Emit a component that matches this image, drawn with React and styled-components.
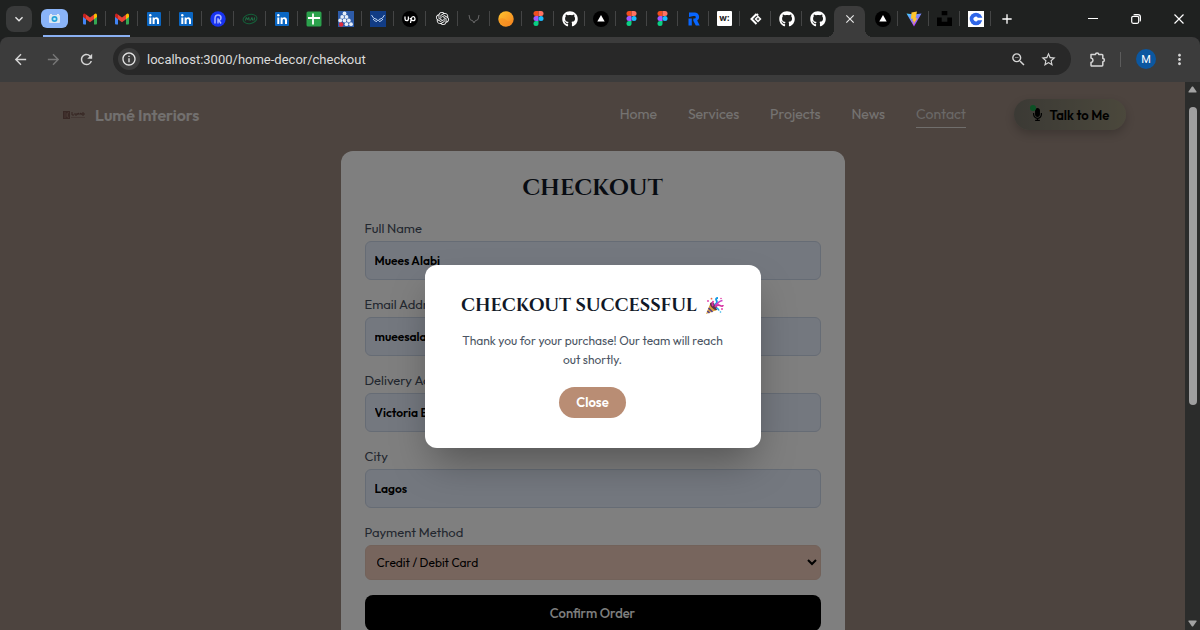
import { useState } from "react";
import styled, { createGlobalStyle } from "styled-components";
import { FaGithub, FaMicrophone } from "react-icons/fa";
import { SiOpenai, SiUnsplash } from "react-icons/si";
import {
  MdArrowBack,
  MdArrowForward,
  MdRefresh,
  MdInfoOutline,
  MdStarBorder,
  MdMoreVert,
  MdAdd,
  MdClose,
  MdKeyboardArrowDown,
  MdOutlineZoomOut,
} from "react-icons/md";

const GlobalStyle = createGlobalStyle`
  * {
    box-sizing: border-box;
  }
  body {
    margin: 0;
    background: #1f2020;
    font-family: Outfit, Lato, sans-serif;
  }
  button, input, select {
    font-family: inherit;
  }
`;

const Browser = styled.div`
  display: flex;
  flex-direction: column;
  height: 100vh;
  overflow: hidden;
`;

/* ---------- tab strip ---------- */

const TabStrip = styled.div`
  display: flex;
  align-items: stretch;
  height: 37px;
  flex-shrink: 0;
  padding-left: 6px;
  background: #1f2120;
`;

const TabSearch = styled.button`
  align-self: center;
  width: 26px;
  height: 26px;
  padding: 0;
  border: none;
  border-radius: 8px;
  display: flex;
  align-items: center;
  justify-content: center;
  background: #393a3a;
  color: #e8e8e8;
  font-size: 16px;
`;

const TabGroup = styled.div`
  display: flex;
  margin-left: 9px;
  background: linear-gradient(#8ab0f2, #8ab0f2) 2px 100% / 87px 2px no-repeat;
`;

const GroupChip = styled.button`
  align-self: center;
  width: 27px;
  height: 19px;
  margin-right: 6px;
  padding: 0;
  border: none;
  border-radius: 6px;
  background: #8ab4f8;
  display: flex;
  align-items: center;
  justify-content: center;
`;

const Tab = styled.button`
  width: ${(props) => (props.$narrow ? 31 : 32)}px;
  padding: 0;
  border: none;
  background: ${(props) =>
    props.$divider
      ? "linear-gradient(#444545, #444545) 100% 50% / 1px 15px no-repeat"
      : "none"};
  color: #fff;
  display: flex;
  align-items: center;
  justify-content: center;
`;

const ActiveTab = styled.button`
  align-self: flex-end;
  position: relative;
  width: 31px;
  height: 31px;
  margin: 0 2px 0 1px;
  padding: 0 0 5px;
  border: none;
  border-radius: 8px 8px 0 0;
  background: #3c3c3c;
  color: #e8e8e8;
  display: flex;
  align-items: center;
  justify-content: center;
  font-size: 14px;

  &::before,
  &::after {
    content: "";
    position: absolute;
    bottom: 0;
    width: 8px;
    height: 8px;
  }
  &::before {
    right: 100%;
    background: radial-gradient(circle at 0 0, transparent 8px, #3c3c3c 8px);
  }
  &::after {
    left: 100%;
    background: radial-gradient(circle at 100% 0, transparent 8px, #3c3c3c 8px);
  }
`;

const WindowControls = styled.div`
  margin-left: auto;
  display: flex;
`;

const WindowButton = styled.button`
  width: 43px;
  padding: 0;
  border: none;
  background: none;
  color: #fff;
  display: flex;
  align-items: center;
  justify-content: center;
`;

/* ---------- toolbar ---------- */

const Toolbar = styled.div`
  display: flex;
  align-items: center;
  height: 45px;
  flex-shrink: 0;
  padding: 0 4px;
  border-bottom: 1px solid #3c3c3c;
  border-radius: 8px 8px 0 0;
  background: #3c3c3c;
`;

const ToolButton = styled.button`
  width: 33px;
  height: 32px;
  padding: 0;
  border: none;
  background: none;
  color: ${(props) => (props.$dim ? "#777777" : "#d6d6d6")};
  display: flex;
  align-items: center;
  justify-content: center;
  font-size: 17px;
`;

const AddressBar = styled.div`
  flex: 1;
  display: flex;
  align-items: center;
  height: 32px;
  margin: 0 10px;
  padding: 0 8px 0 5px;
  border-radius: 16px;
  background: #282828;
`;

const SiteInfo = styled.button`
  width: 22px;
  height: 22px;
  padding: 0;
  border: none;
  border-radius: 50%;
  background: #3c3c3c;
  color: #e3e3e3;
  display: flex;
  align-items: center;
  justify-content: center;
  font-size: 16px;
`;

const Url = styled.input`
  flex: 1;
  min-width: 0;
  padding: 0 7px;
  border: none;
  outline: none;
  background: none;
  color: #dadada;
  font-family: Roboto, sans-serif;
  font-size: 13px;
`;

const AddressButton = styled(ToolButton)`
  width: 30px;
`;

const ToolDivider = styled.div`
  width: 1px;
  height: 15px;
  margin: 0 8px 0 6px;
  background: #5c5c5c;
`;

const Avatar = styled.button`
  width: 20px;
  height: 20px;
  margin: 0 7px;
  padding: 0;
  border: none;
  border-radius: 50%;
  background: #0b57a0;
  color: #fff;
  font-family: Roboto, sans-serif;
  font-size: 11px;
`;

/* ---------- web page ---------- */

const Viewport = styled.div`
  flex: 1;
  min-height: 0;
  display: flex;
`;

const Page = styled.div`
  position: relative;
  flex: 1;
  overflow: hidden;
  background: #9a887e;
`;

const Header = styled.header`
  display: flex;
  align-items: center;
  height: 65px;
  padding: 0 59px 0 63px;
`;

const Brand = styled.a`
  display: flex;
  align-items: center;
  gap: 10px;
  color: #f3f1ef;
  opacity: 0.85;
  font-size: 16px;
  font-weight: 600;
  text-decoration: none;
`;

const Nav = styled.nav`
  display: flex;
  gap: 31px;
  margin-left: auto;
`;

const NavLink = styled.a`
  padding: 4px 0;
  border-bottom: 1px solid ${(props) => (props.$active ? "#e0dcd9" : "transparent")};
  color: ${(props) => (props.$active ? "#d5d1ce" : "#eae6e3")};
  font-size: 14px;
  line-height: 18px;
  text-decoration: none;
`;

const TalkButton = styled.button`
  display: flex;
  align-items: center;
  justify-content: center;
  gap: 6px;
  width: 112px;
  height: 31px;
  margin-left: 48px;
  padding: 0;
  border: none;
  border-radius: 16px;
  background: linear-gradient(90deg, #77746a, #969078);
  box-shadow: 0 4px 10px rgba(0, 0, 0, 0.2);
  color: #000;
  font-size: 13px;
  font-weight: 600;
`;

const Mic = styled.span`
  position: relative;
  display: flex;
`;

const OnlineDot = styled.span`
  position: absolute;
  top: -3px;
  left: -1px;
  width: 6px;
  height: 6px;
  border-radius: 50%;
  background: #16a34a;
`;

const Card = styled.form`
  width: 504px;
  max-width: 100%;
  margin: 4px auto 0;
  padding: 24px;
  border-radius: 12px;
  background: #fff;
`;

const Title = styled.h1`
  margin: 0 0 16px;
  color: #111827;
  font-family: Cinzel, "Liberation Serif", serif;
  font-size: 23px;
  line-height: 28px;
  font-weight: 700;
  text-align: center;
`;

const Field = styled.div`
  display: flex;
  flex-direction: column;
  gap: 4px;
  margin-bottom: 15px;
`;

const Label = styled.label`
  color: #475060;
  font-size: 13px;
  line-height: 18px;
`;

const Input = styled.input`
  width: 100%;
  height: 39px;
  padding: 0 9px;
  border: 1px solid #cdd8ea;
  border-radius: 6px;
  background: #e8f0fe;
  color: #000;
  font-size: 12px;
  font-weight: 600;
`;

const Select = styled.select`
  width: 100%;
  height: 35px;
  padding: 0 7px;
  border: 1px solid #e5c4b4;
  border-radius: 6px;
  background: #efcaba;
  color: #000;
  font-size: 12px;
`;

const ConfirmButton = styled.button`
  width: 100%;
  height: 36px;
  border: none;
  border-radius: 8px;
  background: #000;
  color: #fff;
  font-size: 13px;
  font-weight: 500;
`;

const Overlay = styled.div`
  position: absolute;
  inset: 0;
  display: flex;
  align-items: center;
  justify-content: center;
  background: rgba(0, 0, 0, 0.5);
`;

const Modal = styled.div`
  width: 336px;
  padding: 30px;
  border-radius: 12px;
  background: #fff;
  box-shadow: 0 20px 40px -8px rgba(0, 0, 0, 0.35);
  text-align: center;
`;

const ModalTitle = styled.h2`
  display: flex;
  align-items: center;
  justify-content: center;
  gap: 8px;
  margin: 0 0 14px;
  color: #111827;
  font-family: Cinzel, "Liberation Serif", serif;
  font-size: 18px;
  line-height: 22px;
  font-weight: 600;
  white-space: nowrap;
`;

const ModalText = styled.p`
  margin: 0 0 18px;
  color: #4b5563;
  font-size: 12px;
  line-height: 19px;
`;

const CloseButton = styled.button`
  width: 67px;
  height: 31px;
  padding: 0;
  border: none;
  border-radius: 16px;
  background: #b98d74;
  color: #fff;
  font-size: 13px;
  font-weight: 600;
  display: inline-block;
  vertical-align: top;
`;

const Scrollbar = styled.div`
  display: flex;
  flex-direction: column;
  align-items: center;
  width: 15px;
  padding: 4px 0 3px;
  background: #2b2c2b;
`;

const Thumb = styled.div`
  width: 8px;
  height: 298px;
  margin: 14px 0 auto;
  border-radius: 4px;
  background: #9f9f9f;
`;

/* ---------- icons ---------- */

const Gmail = () => (
  <svg width="16" height="16" viewBox="0 0 16 16">
    <path d="M1 4v8.500q0 1 1 1h2V6.500z" fill="#4285f4" />
    <path d="M15 4v8.500q0 1-1 1h-2V6.500z" fill="#34a853" />
    <path d="M4 3.500v4.700l4 3 4-3V3.500l-4 3z" fill="#ea4335" />
    <path d="M1 4.200q0-2 2-1.500l1 .8v4.700L1 6z" fill="#c5221f" />
    <path d="M15 4.200q0-2-2-1.500l-1 .8v4.700L15 6z" fill="#fbbc04" />
  </svg>
);

const LinkedIn = () => (
  <svg width="14" height="14" viewBox="0 0 14 14">
    <rect width="14" height="14" rx="1" fill="#0a66c2" />
    <circle cx="3.300" cy="3.300" r="1.200" fill="#fff" />
    <path d="M2.300 5.400h2V12h-2zM5.600 5.400h1.900v.9c1-1.700 4.500-1.500 4.500 1.900V12h-2V8.700c0-2.200-2.400-2-2.400 0V12h-2z" fill="#fff" />
  </svg>
);

const RoundR = () => (
  <svg width="16" height="16" viewBox="0 0 16 16">
    <circle cx="8" cy="8" r="7.700" fill="#1733f0" />
    <path d="M5 12.500V7.500Q5 4 8 4t3 3q0 2-2 2.500l2 3M8 12.500V7.200" fill="none" stroke="#aab5ff" strokeWidth="1.500" />
  </svg>
);

const GreenOval = () => (
  <svg width="16" height="16" viewBox="0 0 16 16">
    <ellipse cx="8" cy="8" rx="7" ry="4.500" transform="rotate(-12 8 8)" fill="none" stroke="#15613a" />
    <path d="M3.500 9.500l.8-3 1.200 2 1.200-2 .5 3M8.500 9.500l1.400-3 .8 3M12.500 6.500l-.5 3" fill="none" stroke="#1d7a4a" />
  </svg>
);

const Sheets = () => (
  <svg width="16" height="16" viewBox="0 0 16 16">
    <rect x=".5" y=".5" width="15" height="15" rx="1.500" fill="#2ba24c" />
    <path d="M7 2.500v11M2 7h12" stroke="#fff" strokeWidth="1.800" />
  </svg>
);

const Pyramid = () => (
  <svg width="16" height="16" viewBox="0 0 16 16">
    <rect width="16" height="16" fill="#2d5ba8" />
    <g fill="#e6edf8">
      <circle cx="6.500" cy="2.500" r="1.900" />
      <circle cx="4.200" cy="5.900" r="1.900" />
      <circle cx="8.500" cy="5.900" r="1.900" />
      <circle cx="2.200" cy="9.500" r="1.900" />
      <circle cx="6.500" cy="9.500" r="1.900" />
      <circle cx="10.800" cy="9.500" r="1.900" />
      <circle cx="8.500" cy="13.200" r="1.900" />
      <circle cx="13" cy="13.200" r="1.900" />
    </g>
    <circle cx="3.200" cy="13.500" r="2.200" fill="#e02b3c" />
  </svg>
);

const Wings = () => (
  <svg width="16" height="16" viewBox="0 0 16 16">
    <rect width="16" height="16" fill="#113c85" />
    <path d="M1.500 4Q3 8 7 8.500l1 1.500 1-1.500Q13 8 14.500 4M3 8q1.500 2.500 4 2.500M13 8q-1.500 2.500-4 2.500" fill="none" stroke="#b9d0ef" />
  </svg>
);

const Upwork = () => (
  <svg width="16" height="16" viewBox="0 0 16 16">
    <circle cx="8" cy="8" r="8" fill="#000" />
    <path d="M3 5.500v2.300q0 1.900 1.700 1.900t1.700-1.900V5.500M8.500 12l.8-4.300q.4-2 2-2t1.700 2q0 2-1.800 2T8 7" fill="none" stroke="#fff" strokeWidth="1.300" />
  </svg>
);

const Horns = () => (
  <svg width="16" height="16" viewBox="0 0 16 16">
    <path d="M3 4l1 4.500L7 10l1 2 1-2 3-1.500L13 4" fill="none" stroke="#686868" />
  </svg>
);

const OrangeBall = () => (
  <svg width="16" height="16" viewBox="0 0 16 16">
    <defs>
      <linearGradient id="ball" x1="0" y1="0" x2="1" y2="1">
        <stop offset="0" stopColor="#fdc52f" />
        <stop offset="1" stopColor="#f6811f" />
      </linearGradient>
    </defs>
    <circle cx="8" cy="8" r="7.700" fill="url(#ball)" />
    <path d="M.3 8.500Q5 6 8 9t7.500-1.500A7.700 7.700 0 0 1 .3 8.500z" fill="#f6871f" opacity=".5" />
  </svg>
);

const Figma = () => (
  <svg width="11" height="15" viewBox="0 0 10 15">
    <path d="M5 0H2.500a2.500 2.500 0 0 0 0 5H5z" fill="#f24e1e" />
    <path d="M5 0h2.500a2.500 2.500 0 0 1 0 5H5z" fill="#ff7262" />
    <path d="M5 5H2.500a2.500 2.500 0 0 0 0 5H5z" fill="#a259ff" />
    <circle cx="7.500" cy="7.500" r="2.500" fill="#1abcfe" />
    <path d="M5 10H2.500A2.500 2.500 0 1 0 5 12.500z" fill="#0acf83" />
  </svg>
);

const Vercel = () => (
  <svg width="16" height="16" viewBox="0 0 16 16">
    <circle cx="8" cy="8" r="8" fill="#000" />
    <path d="M8 4l3.700 6.500H4.300z" fill="#fff" />
  </svg>
);

const BlueR = () => (
  <svg width="16" height="16" viewBox="0 0 16 16">
    <path d="M3 1.500h5.500a4.400 4.400 0 0 1 2.700 8l2.500 5H9.800L7.300 9.800V7.500h1.200a1.300 1.300 0 0 0 0-2.600H7.300L3 6z" fill="#0866ff" />
    <path d="M2.500 7.500h3.300v7H2.500z" fill="#0866ff" />
  </svg>
);

const WTile = styled.span`
  width: 15px;
  height: 15px;
  border-radius: 1px;
  background: #fff;
  color: #222;
  font-family: Inter, sans-serif;
  font-size: 9px;
  line-height: 14px;
  font-weight: 700;
`;

const Diamond = () => (
  <svg width="14" height="14" viewBox="0 0 14 14">
    <path d="M7.500 2L2.500 7l5 5M7.500 2l1.500 1.500" fill="none" stroke="#fff" strokeWidth="2" />
    <path d="M9 3.500L12.500 7 9 10.500 5.500 7z" fill="#fff" />
    <path d="M9 5.500L10.500 7 9 8.500 7.500 7z" fill="#555" />
  </svg>
);

const Vite = () => (
  <svg width="16" height="16" viewBox="0 0 16 16">
    <defs>
      <linearGradient id="vite" x1="0" y1="0" x2=".6" y2="1">
        <stop offset="0" stopColor="#41d1ff" />
        <stop offset="1" stopColor="#bd34fe" />
      </linearGradient>
    </defs>
    <path d="M.5 2.500l7.500 1 7.500-1L8 15.500z" fill="url(#vite)" />
    <path d="M11 .5L5.500 1.600 5 8l2-.4-.6 2.800 1.500-.4-1 4L11.500 7l-2 .4z" fill="#ffc62b" />
  </svg>
);

const BlueC = () => (
  <svg width="16" height="16" viewBox="0 0 16 16">
    <rect width="16" height="16" fill="#fff" />
    <circle cx="8" cy="8" r="6.300" fill="#2f66e8" />
    <path d="M15 6.800H9.800a2.300 2.300 0 1 0 0 2.400H15z" fill="#fff" />
  </svg>
);

const Camera = () => (
  <svg width="13" height="11" viewBox="0 0 13 11">
    <rect x="1" y="2" width="11" height="8" rx="1" fill="#dde7f2" />
    <path d="M2 1h2v1H2zM9 1h2v1H9z" fill="#e7edf4" />
    <circle cx="6.500" cy="6" r="3" fill="#27a2d8" />
    <circle cx="6.500" cy="6" r="1.300" fill="#b8ecff" />
  </svg>
);

const Puzzle = () => (
  <svg width="17" height="17" viewBox="0 0 17 17" fill="none" stroke="#d6d6d6" strokeWidth="1.500">
    <path d="M2 3.500h4.500a1.600 1.600 0 0 1 3.200 0H13q.8 0 .8.800v3.200a1.600 1.600 0 0 1 0 3.200V14q0 .9-.8.900H2.700q-.7 0-.7-.9v-2.600q2-.4 2-2.200T2 7V3.500z" strokeLinejoin="round" />
  </svg>
);

const Logo = () => (
  <svg width="22" height="8" viewBox="0 0 22 8">
    <rect width="7" height="8" fill="#6b4742" />
    <path d="M2 1v6M4 2v4M5.500 1L4 4l1.500 3" stroke="#9a7c74" fill="none" strokeWidth=".7" />
    <path d="M9 1v3h2M12 2v2h2V2M15 4V2l1.500 1L18 2v2M19 2h2v2h-2z" stroke="#63403b" fill="none" />
    <path d="M8 6.500h14" stroke="#806660" strokeWidth=".8" />
  </svg>
);

const PartyPopper = () => (
  <svg width="19" height="18" viewBox="0 0 19 18">
    <path d="M1 17L5.500 6q5 2 6.500 7z" fill="#dda23a" />
    <path d="M3.500 11l4 4M2.300 14l2.200 2" stroke="#56418a" strokeWidth="1.600" />
    <ellipse cx="8.700" cy="9.300" rx="2.300" ry="4.700" transform="rotate(-43 8.700 9.300)" fill="#623347" />
    <path d="M8 9Q6.500 6 8.500 4M10 10q2-3 5-1.500t3-.5" fill="none" stroke="#d531a2" strokeWidth="1.700" />
    <path d="M9.500 8Q13 6 11.500 3.500T13 1" fill="none" stroke="#159ce4" strokeWidth="1.900" />
    <path d="M10 8.500Q13 6 14 5t3.500-1.500" fill="none" stroke="#ca3fc5" strokeWidth="1.500" />
    <path d="M11 11q2 0 3 2.500" fill="none" stroke="#20aee9" strokeWidth="1.700" />
    <circle cx="3" cy="4" r=".9" fill="#e23ba6" />
    <circle cx="6.500" cy="1.700" r=".9" fill="#ee6c46" />
    <circle cx="17" cy="12" r=".9" fill="#e23ba6" />
    <circle cx="15.500" cy="15" r=".8" fill="#2bb1e7" />
    <circle cx="16" cy="1.500" r=".8" fill="#e23ba6" />
  </svg>
);

const Minimize = () => (
  <svg width="10" height="10" viewBox="0 0 10 10">
    <path d="M0 4.500h10" stroke="#fff" />
  </svg>
);

const Restore = () => (
  <svg width="10" height="10" viewBox="0 0 10 10" fill="none" stroke="#fff" strokeWidth="1.200">
    <rect x=".7" y="2.300" width="7" height="7" rx="1.500" />
    <path d="M2.700 1Q3 .6 4 .6h3Q9.400.6 9.400 3v3q0 1-.5 1.300" />
  </svg>
);

const Cross = () => (
  <svg width="10" height="10" viewBox="0 0 10 10">
    <path d="M.5.5l9 9M9.500.5l-9 9" stroke="#fff" strokeWidth="1.200" />
  </svg>
);

const Arrow = ({ down }) => (
  <svg width="9" height="7" viewBox="0 0 9 7">
    <path d={down ? "M1 .5h7q1 0 .5 1L5 6.500H4L.5 1.500Q0 .5 1 .5z" : "M1 6.500h7q1 0 .5-1L5 .5H4L.5 5.500Q0 6.500 1 6.500z"} fill="#a3a3a3" />
  </svg>
);

const github = { title: "GitHub", icon: <FaGithub size={16} /> };
const figma = { title: "Figma", icon: <Figma /> };
const vercel = { title: "Vercel", icon: <Vercel /> };
const linkedin = { title: "LinkedIn", icon: <LinkedIn /> };
const gmail = { title: "Gmail", icon: <Gmail /> };

const wideTabs = [
  linkedin,
  linkedin,
  { title: "Workspace", icon: <RoundR /> },
  { title: "Portal", icon: <GreenOval /> },
  linkedin,
  { title: "Sheets", icon: <Sheets /> },
  { title: "Network", icon: <Pyramid /> },
  { title: "Wings", icon: <Wings /> },
  { title: "Upwork", icon: <Upwork /> },
  { title: "ChatGPT", icon: <SiOpenai size={13} /> },
  { title: "Studio", icon: <Horns /> },
  { title: "Sun", icon: <OrangeBall /> },
  figma,
];

const narrowTabs = [
  github,
  vercel,
  figma,
  figma,
  { title: "Remote", icon: <BlueR /> },
  { title: "W", icon: <WTile>w:</WTile> },
  { title: "Diamond", icon: <Diamond /> },
  github,
  github,
];

const lastTabs = [
  vercel,
  { title: "Vite", icon: <Vite /> },
  { title: "Unsplash", icon: <SiUnsplash size={15} color="#000" /> },
  { title: "C", icon: <BlueC /> },
];

const links = ["Home", "Services", "Projects", "News", "Contact"];

const fields = [
  { id: "name", label: "Full Name", value: "Muees Alabi" },
  { id: "email", label: "Email Address", value: "mueesalabi" },
  { id: "address", label: "Delivery Address", value: "Victoria E" },
  { id: "city", label: "City", value: "Lagos" },
];

const App = () => {
  const [open, setOpen] = useState(true);

  return (
    <Browser>
      <GlobalStyle />
      <TabStrip>
        <TabSearch aria-label="Search tabs">
          <MdKeyboardArrowDown />
        </TabSearch>
        <TabGroup>
          <GroupChip aria-label="Tab group">
            <Camera />
          </GroupChip>
          <Tab aria-label={gmail.title} $divider>{gmail.icon}</Tab>
          <Tab aria-label={gmail.title} $divider>{gmail.icon}</Tab>
        </TabGroup>
        {wideTabs.map((tab, i) => (
          <Tab key={i} aria-label={tab.title} $divider>
            {tab.icon}
          </Tab>
        ))}
        {narrowTabs.map((tab, i) => (
          <Tab key={i} aria-label={tab.title} $narrow $divider={i < narrowTabs.length - 1}>
            {tab.icon}
          </Tab>
        ))}
        <ActiveTab aria-label="Close tab">
          <MdClose />
        </ActiveTab>
        {lastTabs.map((tab, i) => (
          <Tab key={i} aria-label={tab.title} $narrow $divider>
            {tab.icon}
          </Tab>
        ))}
        <Tab aria-label="New tab">
          <MdAdd size={16} />
        </Tab>
        <WindowControls>
          <WindowButton aria-label="Minimize">
            <Minimize />
          </WindowButton>
          <WindowButton aria-label="Restore">
            <Restore />
          </WindowButton>
          <WindowButton aria-label="Close window">
            <Cross />
          </WindowButton>
        </WindowControls>
      </TabStrip>

      <Toolbar>
        <ToolButton aria-label="Back">
          <MdArrowBack />
        </ToolButton>
        <ToolButton aria-label="Forward" $dim>
          <MdArrowForward />
        </ToolButton>
        <ToolButton aria-label="Reload">
          <MdRefresh />
        </ToolButton>
        <AddressBar>
          <SiteInfo aria-label="Site information">
            <MdInfoOutline />
          </SiteInfo>
          <Url aria-label="Address" defaultValue="localhost:3000/home-decor/checkout" />
          <AddressButton aria-label="Zoom">
            <MdOutlineZoomOut />
          </AddressButton>
          <AddressButton aria-label="Bookmark">
            <MdStarBorder />
          </AddressButton>
        </AddressBar>
        <ToolButton aria-label="Extensions">
          <Puzzle />
        </ToolButton>
        <ToolDivider />
        <Avatar aria-label="Profile">M</Avatar>
        <ToolButton aria-label="Menu">
          <MdMoreVert />
        </ToolButton>
      </Toolbar>

      <Viewport>
        <Page>
          <Header>
            <Brand href="#home">
              <Logo />
              Lumé Interiors
            </Brand>
            <Nav>
              {links.map((link) => (
                <NavLink key={link} href={"#" + link.toLowerCase()} $active={link === "Contact"}>
                  {link}
                </NavLink>
              ))}
            </Nav>
            <TalkButton>
              <Mic>
                <OnlineDot />
                <FaMicrophone />
              </Mic>
              Talk to Me
            </TalkButton>
          </Header>

          <Card onSubmit={(e) => e.preventDefault()}>
            <Title>CHECKOUT</Title>
            {fields.map((field) => (
              <Field key={field.id}>
                <Label htmlFor={field.id}>{field.label}</Label>
                <Input id={field.id} defaultValue={field.value} />
              </Field>
            ))}
            <Field>
              <Label htmlFor="payment">Payment Method</Label>
              <Select id="payment">
                <option>Credit / Debit Card</option>
              </Select>
            </Field>
            <ConfirmButton onClick={() => setOpen(true)}>Confirm Order</ConfirmButton>
          </Card>

          {open && (
            <Overlay>
              <Modal role="dialog" aria-labelledby="dialog-title">
                <ModalTitle id="dialog-title">
                  CHECKOUT SUCCESSFUL <PartyPopper />
                </ModalTitle>
                <ModalText>
                  Thank you for your purchase! Our team will reach out shortly.
                </ModalText>
                <CloseButton onClick={() => setOpen(false)}>Close</CloseButton>
              </Modal>
            </Overlay>
          )}
        </Page>
        <Scrollbar>
          <Arrow />
          <Thumb />
          <Arrow down />
        </Scrollbar>
      </Viewport>
    </Browser>
  );
};

export default App;
